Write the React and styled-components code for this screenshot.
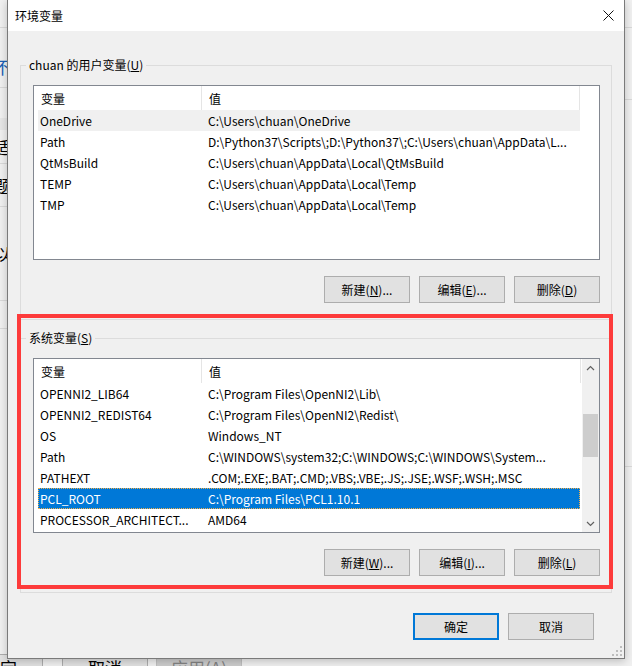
import React from 'react'
import styled, { createGlobalStyle } from 'styled-components'

const GlobalStyle = createGlobalStyle`
  html, body {
    margin: 0;
    padding: 0;
  }
  body {
    width: 632px;
    height: 666px;
    overflow: hidden;
    background: #f0f0f0;
    font-family: "Noto Sans CJK SC", "Noto Sans", sans-serif;
    font-size: 12px;
    color: #000;
  }
`;

const Desktop = styled.div`
  position: relative;
  width: 632px;
  height: 666px;
  overflow: hidden;
`;

/* window behind the dialog, only its edges show */
const BackWindow = styled.div`
  position: absolute;
  left: -60px;
  top: 0;
  width: 330px;
  height: 700px;
  background: #f0f0f0;
  display: flex;
  flex-direction: column;
`;

const BgRow = styled.div`
  height: ${p => p.h}px;
  flex: none;
  box-sizing: border-box;
  border-bottom: ${p => (p.line ? '1px solid #d9d9d9' : 'none')};
  background: ${p => p.bg || 'transparent'};
  padding-left: 54px;
  padding-top: ${p => p.pt || 0}px;
  display: flex;
  align-items: center;
  font-size: 17px;
  color: ${p => p.color || '#000'};
`;

const BgFooter = styled.div`
  display: flex;
  gap: 8px;
  padding-left: 17px;
  margin-top: -4px;
`;

const BgButton = styled.div`
  width: 86px;
  height: 26px;
  box-sizing: border-box;
  border: 1px solid ${p => (p.disabled ? '#bfbfbf' : '#adadad')};
  background: ${p => (p.disabled ? '#cccccc' : '#e1e1e1')};
  color: ${p => (p.disabled ? '#838383' : '#000')};
  display: flex;
  align-items: center;
  justify-content: center;
  font-size: 17px;
  margin-right: ${p => p.gapAfter || 0}px;
`;

const RightStrip = styled.div`
  position: absolute;
  left: 625px;
  top: 0;
  width: 20px;
  height: 666px;
  display: flex;
  flex-direction: column;
`;

const Dialog = styled.div`
  position: absolute;
  left: 7px;
  top: 0;
  width: 618px;
  height: 659px;
  box-sizing: border-box;
  border: 1px solid #7a7a7a;
  border-top: none;
  background: #f0f0f0;
  display: flex;
  flex-direction: column;
  box-shadow: 0 2px 8px rgba(0, 0, 0, 0.22);
`;

const TitleBar = styled.div`
  height: 31px;
  flex: none;
  background: #fff;
  display: flex;
  align-items: center;
  justify-content: space-between;
  padding: 0 10px 0 7px;
`;

const Title = styled.span`
  font-size: 12px;
  line-height: 16px;
`;

const Body = styled.div`
  padding: 26px 12px 0 12px;
  display: flex;
  flex-direction: column;
`;

const Group = styled.fieldset`
  margin: ${p => p.top || 0}px 0 0 0;
  padding: 0;
  border: 1px solid #dcdcdc;
  min-width: 0;
`;

const Legend = styled.legend`
  margin-left: 5px;
  padding: 0 3px;
  line-height: 16px;
  font-size: 12px;
`;

const GroupContent = styled.div`
  padding: 0 11px 16px 12px;
`;

const ListBox = styled.div`
  margin-top: 12px;
  height: 175px;
  box-sizing: border-box;
  border: 1px solid #828790;
  background: #fff;
  display: flex;
  overflow: hidden;
`;

const ListMain = styled.div`
  flex: 1;
  display: flex;
  flex-direction: column;
  min-width: 0;
`;

const Header = styled.div`
  height: 24px;
  flex: none;
  display: flex;
`;

const HeadCell = styled.div`
  width: ${p => p.w}px;
  flex: none;
  box-sizing: border-box;
  padding-left: 7px;
  display: flex;
  align-items: center;
  border-right: 1px solid #e5e5e5;
`;

const Row = styled.div`
  margin-left: 4px;
  width: 542px;
  height: 21px;
  flex: none;
  box-sizing: border-box;
  display: grid;
  grid-template-columns: 163px 379px;
  align-items: center;
  background: ${p => (p.selected ? '#0078d7' : p.hover ? '#f0f0f0' : 'transparent')};
  color: ${p => (p.selected ? '#fff' : '#000')};
  outline: ${p => (p.selected ? '1px dotted #f3b04a' : 'none')};
  outline-offset: -1px;
`;

const Cell = styled.div`
  padding-left: ${p => (p.value ? 7 : 2)}px;
  white-space: nowrap;
  overflow: hidden;
  line-height: 16px;
`;

const ScrollBar = styled.div`
  width: 17px;
  flex: none;
  background: #f0f0f0;
  display: flex;
  flex-direction: column;
`;

const ScrollArrow = styled.div`
  height: 17px;
  flex: none;
  display: flex;
  align-items: center;
  justify-content: center;
`;

const ScrollTrack = styled.div`
  flex: 1;
  display: flex;
  flex-direction: column;
  align-items: center;
`;

const Thumb = styled.div`
  margin-top: 38px;
  width: 15px;
  height: 43px;
  background: #cdcdcd;
`;

const ButtonRow = styled.div`
  display: flex;
  justify-content: flex-end;
  gap: 9px;
  margin-top: ${p => p.top || 16}px;
  padding-right: ${p => p.right || 0}px;
`;

const Button = styled.div`
  width: 86px;
  height: 27px;
  box-sizing: border-box;
  border: ${p => (p.primary ? '2px solid #0078d7' : '1px solid #adadad')};
  background: #e1e1e1;
  display: flex;
  align-items: center;
  justify-content: center;
  font-size: 12px;
  line-height: 16px;
`;

const RedMark = styled.div`
  position: absolute;
  left: 9px;
  top: 314px;
  width: 596px;
  height: 275px;
  box-sizing: border-box;
  border: 4px solid #fd3b3b;
  pointer-events: none;
`;

const Grip = styled.svg`
  position: absolute;
  right: 2px;
  bottom: 2px;
`;

// values are shown the way the list view cuts them, with "..."
const userVars = [
  ['OneDrive', 'C:\\Users\\chuan\\OneDrive'],
  ['Path', 'D:\\Python37\\Scripts\\;D:\\Python37\\;C:\\Users\\chuan\\AppData\\L...'],
  ['QtMsBuild', 'C:\\Users\\chuan\\AppData\\Local\\QtMsBuild'],
  ['TEMP', 'C:\\Users\\chuan\\AppData\\Local\\Temp'],
  ['TMP', 'C:\\Users\\chuan\\AppData\\Local\\Temp'],
];

const sysVars = [
  ['OPENNI2_LIB64', 'C:\\Program Files\\OpenNI2\\Lib\\'],
  ['OPENNI2_REDIST64', 'C:\\Program Files\\OpenNI2\\Redist\\'],
  ['OS', 'Windows_NT'],
  ['Path', 'C:\\WINDOWS\\system32;C:\\WINDOWS;C:\\WINDOWS\\System...'],
  ['PATHEXT', '.COM;.EXE;.BAT;.CMD;.VBS;.VBE;.JS;.JSE;.WSF;.WSH;.MSC'],
  ['PCL_ROOT', 'C:\\Program Files\\PCL1.10.1'],
  ['PROCESSOR_ARCHITECT...', 'AMD64'],
];

const Chevron = ({ down }) => (
  <svg width="9" height="6" viewBox="0 0 9 6">
    <polyline
      points={down ? '1,1 4.5,4.5 8,1' : '1,5 4.5,1.5 8,5'}
      fill="none"
      stroke="#606060"
      strokeWidth="1.2"
    />
  </svg>
);

const VarList = ({ rows, hover, selected, scroll }) => (
  <ListBox>
    <ListMain>
      <Header>
        <HeadCell w={168}>变量</HeadCell>
        <HeadCell w={scroll ? 379 : 378}>值</HeadCell>
      </Header>
      {rows.map(([name, value]) => (
        <Row key={name + value} hover={name === hover} selected={name === selected}>
          <Cell>{name}</Cell>
          <Cell value>{value}</Cell>
        </Row>
      ))}
    </ListMain>
    {scroll && (
      <ScrollBar>
        <ScrollArrow><Chevron /></ScrollArrow>
        <ScrollTrack><Thumb /></ScrollTrack>
        <ScrollArrow><Chevron down /></ScrollArrow>
      </ScrollBar>
    )}
  </ListBox>
);

export default function App() {
  return (
    <Desktop>
      <GlobalStyle />
      <BackWindow>
        <BgRow h={28} line />
        <BgRow h={60} line pt={18} color="#1a5fb4">不</BgRow>
        <BgRow h={30} />
        <BgRow h={12} bg="#e6e6e6" />
        <BgRow h={34} line>适</BgRow>
        <BgRow h={43} line>题</BgRow>
        <BgRow h={94} line>以</BgRow>
        <BgRow h={28} line />
        <BgRow h={329} />
        <BgFooter>
          <BgButton gapAfter={11}>确定</BgButton>
          <BgButton>取消</BgButton>
          <BgButton disabled>应用(A)</BgButton>
        </BgFooter>
      </BackWindow>
      <RightStrip>
        <BgRow h={28} line />
        <BgRow h={72} line />
        <BgRow h={367} line />
      </RightStrip>

      <Dialog>
        <TitleBar>
          <Title>环境变量</Title>
          <svg width="11" height="11" viewBox="0 0 11 11">
            <path d="M0.5 0.5 L10.5 10.5 M10.5 0.5 L0.5 10.5" stroke="#111" strokeWidth="1" />
          </svg>
        </TitleBar>
        <Body>
          <Group>
            <Legend>chuan 的用户变量(<u>U</u>)</Legend>
            <GroupContent>
              <VarList rows={userVars} hover="OneDrive" />
              <ButtonRow>
                <Button>新建(<u>N</u>)...</Button>
                <Button>编辑(<u>E</u>)...</Button>
                <Button>删除(<u>D</u>)</Button>
              </ButtonRow>
            </GroupContent>
          </Group>
          <Group top={10}>
            <Legend>系统变量(<u>S</u>)</Legend>
            <GroupContent>
              <VarList rows={sysVars} selected="PCL_ROOT" scroll />
              <ButtonRow>
                <Button>新建(<u>W</u>)...</Button>
                <Button>编辑(<u>I</u>)...</Button>
                <Button>删除(<u>L</u>)</Button>
              </ButtonRow>
            </GroupContent>
          </Group>
          <ButtonRow top={20} right={18}>
            <Button primary>确定</Button>
            <Button>取消</Button>
          </ButtonRow>
        </Body>
        <RedMark />
        <Grip width="10" height="10" viewBox="0 0 10 10">
          <g fill="#bdbdbd">
            <rect x="8" y="0" width="2" height="2" />
            <rect x="4" y="4" width="2" height="2" />
            <rect x="8" y="4" width="2" height="2" />
            <rect x="0" y="8" width="2" height="2" />
            <rect x="4" y="8" width="2" height="2" />
            <rect x="8" y="8" width="2" height="2" />
          </g>
        </Grip>
      </Dialog>
    </Desktop>
  )
}
